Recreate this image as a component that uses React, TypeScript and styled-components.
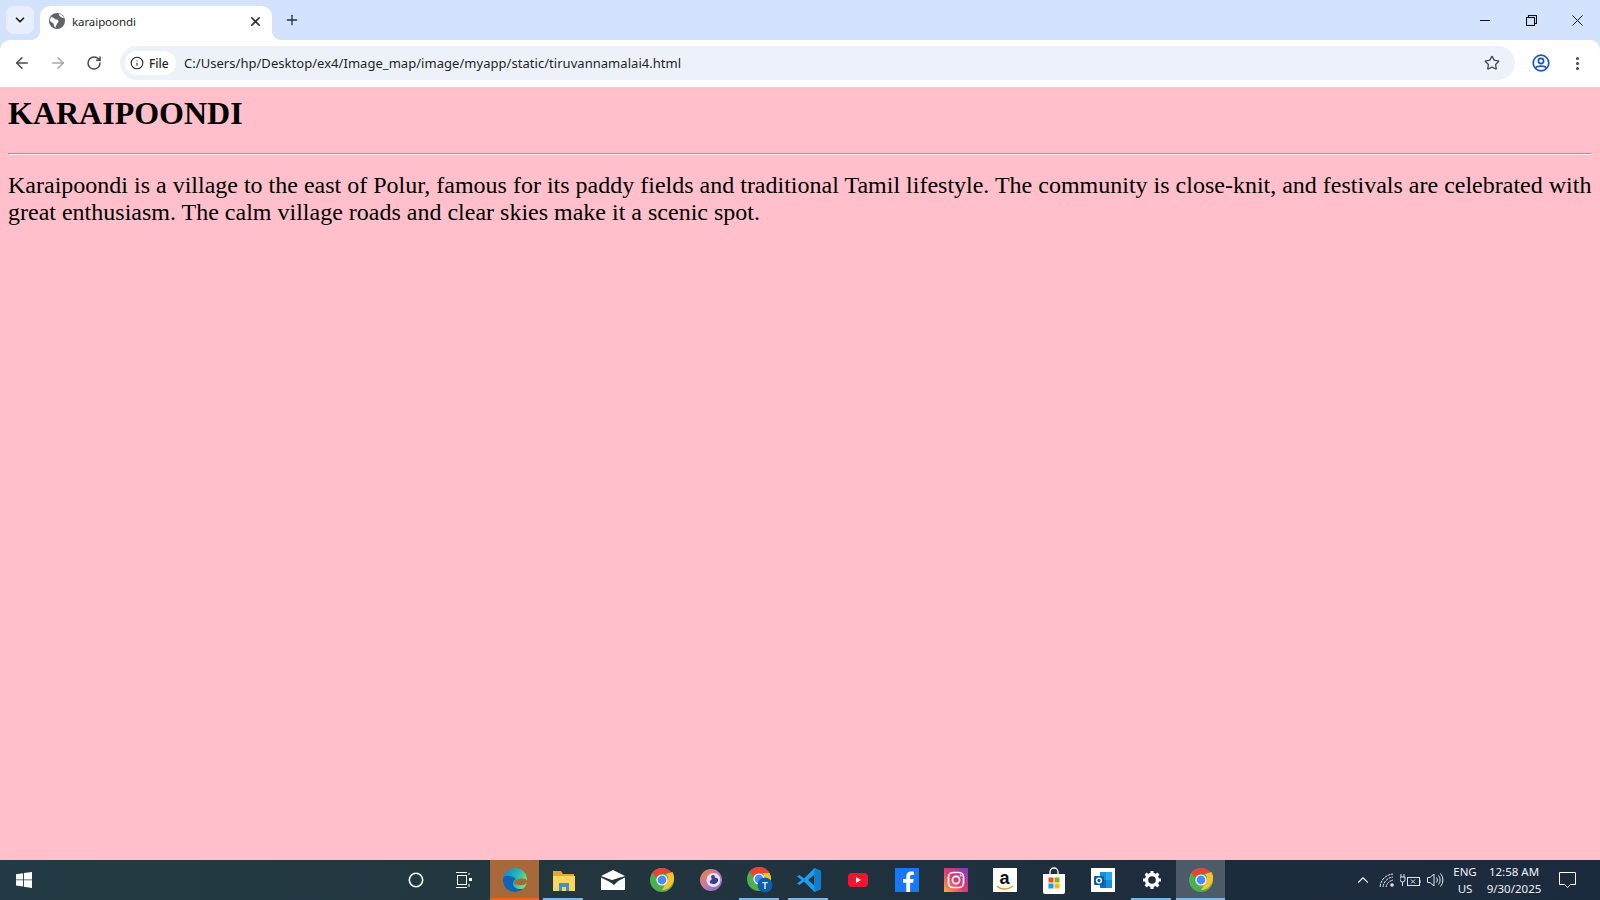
import React from 'react';
import styled, { createGlobalStyle } from 'styled-components';
import { ArrowLeft, ArrowRight, ChevronDown, ChevronUp, Info, MoreVertical, Plus, RotateCw, Star, X } from 'lucide-react';

const GlobalStyle = createGlobalStyle`
  html, body { margin: 0; padding: 0; height: 100%; overflow: hidden; }
  #root { height: 100%; }
`;

const Screen = styled.div`
  width: 1600px;
  height: 900px;
  display: flex;
  flex-direction: column;
  font-family: "Noto Sans", "Open Sans", sans-serif;
`;

/* browser chrome */
const TabStrip = styled.div`
  height: 40px;
  flex: none;
  background: #d3e3fd;
  display: flex;
  align-items: flex-end;
  padding-left: 6px;
`;

const TabSearch = styled.div`
  width: 28px;
  height: 28px;
  margin-bottom: 6px;
  border-radius: 8px;
  background: #e8effb;
  display: flex;
  align-items: center;
  justify-content: center;
  color: #1f1f1f;
`;

const Tab = styled.div`
  position: relative;
  width: 232px;
  height: 34px;
  margin-left: 6px;
  background: #fff;
  border-radius: 10px 10px 0 0;
  display: flex;
  align-items: center;
  padding: 0 9px 4px;
  box-sizing: border-box;
  font-size: 11.5px;
  color: #1f1f1f;

  &::before, &::after {
    content: '';
    position: absolute;
    bottom: 0;
    width: 10px;
    height: 10px;
  }
  &::before {
    left: -10px;
    background: radial-gradient(circle at 0 0, transparent 10px, #fff 10.5px);
  }
  &::after {
    right: -10px;
    background: radial-gradient(circle at 100% 0, transparent 10px, #fff 10.5px);
  }
`;

const TabTitle = styled.span`
  flex: 1;
  margin-left: 7px;
  letter-spacing: -0.08px;
`;

const NewTab = styled.div`
  margin: 0 0 6px 6px;
  width: 28px;
  height: 28px;
  display: flex;
  align-items: center;
  justify-content: center;
  color: #2b2f36;
`;

const WindowControls = styled.div`
  margin-left: auto;
  align-self: flex-start;
  display: flex;
`;

const WindowButton = styled.div`
  width: 46px;
  height: 40px;
  display: flex;
  align-items: center;
  justify-content: center;
`;

const Toolbar = styled.div`
  height: 47px;
  flex: none;
  background: #d3e3fd;
`;

const ToolbarInner = styled.div`
  height: 100%;
  box-sizing: border-box;
  padding: 0 0 1px 4px;
  background: #fff;
  border-radius: 10px 10px 0 0;
  display: flex;
  align-items: center;
`;

const NavButton = styled.div<{ $dim?: boolean }>`
  width: 36px;
  height: 36px;
  display: flex;
  align-items: center;
  justify-content: center;
  color: ${p => (p.$dim ? '#a4a7ab' : '#474a4f')};
`;

const Omnibox = styled.div`
  width: 1395px;
  height: 34px;
  margin: 0 8px 0 8px;
  border-radius: 17px;
  background: #edf2fa;
  display: flex;
  align-items: center;
  padding: 0 15px 0 5px;
  box-sizing: border-box;
`;

const SiteChip = styled.div`
  width: 51px;
  height: 24px;
  border-radius: 12px;
  background: #fff;
  display: flex;
  align-items: center;
  gap: 5px;
  padding-left: 5px;
  box-sizing: border-box;
  font-size: 12px;
  font-weight: 500;
  color: #1f1f1f;
`;

const Url = styled.span`
  flex: 1;
  margin-left: 8px;
  font-size: 13px;
  letter-spacing: 0.04px;
  color: #1f1f1f;
  white-space: nowrap;
`;

/* page content */
const Page = styled.main`
  flex: 1;
  background: #ffc0cb;
  padding: 8px;
  color: #000;
  font-family: "Liberation Serif", "Times New Roman", serif;
  min-height: 0;
`;

const Heading = styled.h1`
  margin: 0 0 21.44px;
  font-size: 32px;
  font-weight: bold;
`;

const Rule = styled.hr`
  margin: 0 0 17px;
`;

const Body = styled.p`
  margin: 0;
  font-size: 24px;
  line-height: 27px;
`;

/* taskbar */
const Taskbar = styled.footer`
  height: 40px;
  flex: none;
  display: flex;
  align-items: stretch;
  background: linear-gradient(90deg, #233b44 0%, #22353f 40%, #1d2c3d 75%, #1c2a3e 100%);
  color: #fff;
`;

const StartButton = styled.div`
  width: 48px;
  display: flex;
  align-items: center;
  justify-content: center;
`;

const TaskIcons = styled.div`
  margin-left: 344px;
  display: flex;
`;

const TaskItem = styled.div<{ $bg?: string; $bar?: string; $full?: boolean }>`
  position: relative;
  width: 49px;
  display: flex;
  align-items: center;
  justify-content: center;
  background: ${p => p.$bg ?? 'transparent'};

  &::after {
    content: '';
    display: ${p => (p.$bar ? 'block' : 'none')};
    position: absolute;
    bottom: 0;
    left: ${p => (p.$full ? '0' : '4px')};
    right: ${p => (p.$full ? '0' : '5px')};
    height: 2px;
    background: ${p => p.$bar};
  }
`;

const Tray = styled.div`
  margin-left: auto;
  display: flex;
  align-items: center;
`;

const TrayIcon = styled.div<{ $w: number }>`
  width: ${p => p.$w}px;
  display: flex;
  justify-content: center;
`;

const TrayText = styled.div<{ $w: number }>`
  width: ${p => p.$w}px;
  font-size: 11.5px;
  line-height: 17px;
  text-align: center;
  color: #eef1f4;
  white-space: nowrap;
`;

const Notify = styled.div`
  width: 44px;
  display: flex;
  justify-content: center;
  margin-right: 11px;
`;

const AmazonTile = styled.div`
  position: relative;
  width: 24px;
  height: 24px;
  background: #fff;
  color: #111;
  font: bold 18px/20px "Liberation Sans", sans-serif;
  text-align: center;
`;

const AmazonSmile = styled.svg`
  position: absolute;
  left: 3px;
  bottom: 1px;
`;

const WindowsLogo = () => (
  <svg width="16" height="16" viewBox="0 0 16 16" fill="#fff">
    <path d="M0 2.2 7 1.2v6.2H0zM7.9 1.1 16 0v7.4H7.9zM0 8.3h7v6.3l-7-1zM7.9 8.3H16V16l-8.1-1.2z" />
  </svg>
);

const ChromeLogo = () => (
  <svg width="24" height="24" viewBox="0 0 24 24">
    <circle cx="12" cy="12" r="12" fill="#4caf50" />
    <path d="M12 0a12 12 0 0 1 10.4 6H12a6 6 0 0 0-5.6 3.8L2.3 5A12 12 0 0 1 12 0z" fill="#ea4335" />
    <path d="M22.4 6A12 12 0 0 1 12 24l5.2-9A6 6 0 0 0 16 8z" fill="#fbc02d" transform="translate(0 -2)" />
    <circle cx="12" cy="12" r="5.6" fill="#fff" />
    <circle cx="12" cy="12" r="4.4" fill="#4a8af4" />
  </svg>
);

const EdgeLogo = () => (
  <svg width="24" height="24" viewBox="0 0 24 24">
    <defs>
      <linearGradient id="edgeTop" x1="0" y1="0.2" x2="1" y2="0.6">
        <stop offset="0" stopColor="#1b7fd0" />
        <stop offset="0.55" stopColor="#27b8b0" />
        <stop offset="1" stopColor="#86e070" />
      </linearGradient>
    </defs>
    <circle cx="12" cy="12" r="12" fill="url(#edgeTop)" />
    <path d="M.2 10C-1 18 5 24 12 24c3.400 0 6.400-1.300 8.600-3.500-5 1.800-10.600-.5-10.600-5 0-2 1.200-3.500 3-4.500C8 7 2 7 .2 10z" fill="#0f63b8" />
    <path d="M11 15c.5-3 4-4.500 8-4.500 2.500 0 5 .8 5 2.500 0 2.500-2.500 4-5.500 4-3.500 0-7.800-.5-7.500-2z" fill="#a8693a" />
  </svg>
);

const ExplorerLogo = () => (
  <svg width="24" height="24" viewBox="0 0 24 24">
    <path d="M1 3h8l2 3h11v17H1z" fill="#e0a92e" />
    <path d="M1 8h22v15H1z" fill="#fbd65e" />
    <path d="M7 15h10v8h-3v-4h-4v4H7z" fill="#3f8fc9" />
  </svg>
);

const MailLogo = () => (
  <svg width="24" height="24" viewBox="0 0 24 24" fill="#fff">
    <path d="M0 8 12 2l12 6-12 4.5z" />
    <path d="M0 9.5V22h24V9.5l-12 6z" />
    <path d="M8 13 21 9l-8 8z" fill="#22353f" />
  </svg>
);

const CopilotLogo = () => (
  <svg width="22" height="22" viewBox="0 0 22 22">
    <defs>
      <linearGradient id="arc" x1="0" y1="0" x2="1" y2="1">
        <stop offset="0" stopColor="#e8863a" />
        <stop offset="0.5" stopColor="#c77aa8" />
        <stop offset="1" stopColor="#7a6fd0" />
      </linearGradient>
    </defs>
    <circle cx="11" cy="11" r="11" fill="url(#arc)" />
    <circle cx="13.5" cy="11" r="7" fill="#e8e6f6" />
    <path d="M10 12c3-4 7-4 8-2s-2 6-5 5-4-1-3-3z" fill="#3f3a90" />
    <circle cx="13" cy="8" r="2" fill="#3f3a90" />
  </svg>
);

const ChromeBadged = () => (
  <svg width="26" height="26" viewBox="0 0 26 26">
    <circle cx="12" cy="12" r="12" fill="#4caf50" />
    <path d="M12 0a12 12 0 0 1 10.4 6H12a6 6 0 0 0-5.6 3.8L2.3 5A12 12 0 0 1 12 0z" fill="#ea4335" />
    <path d="M22.4 6A12 12 0 0 1 20 21l-5-8a6 6 0 0 0 1-7z" fill="#fbc02d" />
    <circle cx="12" cy="12" r="5.6" fill="#fff" />
    <circle cx="12" cy="12" r="4.4" fill="#4a8af4" />
    <circle cx="18" cy="18" r="7.5" fill="#0f5fa8" />
    <path d="M15.2 15h5.6v1.3h-2.1V22h-1.4v-5.7h-2.1z" fill="#e6eef7" />
  </svg>
);

const VsCodeLogo = () => (
  <svg width="24" height="24" viewBox="0 0 24 24">
    <path d="M17.5 0 24 3v18l-6.5 3L7 13.5 2.5 17 0 15.5 4.5 12 0 8.5 2.5 7 7 10.500z" fill="#1f9cf0" />
    <path d="M17.5 6.500 11 12l6.500 5.500z" fill="#22353f" />
    <path d="M17.5 0 24 3v18l-6.5 3z" fill="#0f7fcc" />
    <path d="M17.500 6.500v11L20 19V5z" fill="#0f7fcc" />
  </svg>
);

const YoutubeLogo = () => (
  <svg width="20" height="14" viewBox="0 0 20 14">
    <rect width="20" height="14" rx="4" fill="#f0142f" />
    <path d="M8 4l5 3-5 3z" fill="#fff" />
  </svg>
);

const FacebookLogo = () => (
  <svg width="24" height="24" viewBox="0 0 24 24">
    <rect width="24" height="24" fill="#1877f2" />
    <path d="M16.600 24v-9.300h3.100l.5-3.600h-3.600V8.800c0-1 .3-1.800 1.800-1.800h1.900V3.800c-.3 0-1.500-.2-2.800-.2-2.800 0-4.700 1.700-4.700 4.800v2.700H9.600v3.600h3.200V24z" fill="#fff" transform="translate(-1.500 0)" />
  </svg>
);

const InstagramLogo = () => (
  <svg width="24" height="24" viewBox="0 0 24 24">
    <defs>
      <linearGradient id="insta" x1="0" y1="1" x2="1" y2="0">
        <stop offset="0" stopColor="#fdb03c" />
        <stop offset="0.45" stopColor="#e83a6c" />
        <stop offset="1" stopColor="#7a3cc8" />
      </linearGradient>
    </defs>
    <rect width="24" height="24" fill="url(#insta)" />
    <rect x="4.500" y="4.500" width="15" height="15" rx="4.500" fill="none" stroke="#fff" strokeWidth="1.700" />
    <circle cx="12" cy="12" r="3.600" fill="none" stroke="#fff" strokeWidth="1.700" />
    <circle cx="16.600" cy="7.400" r="1" fill="#fff" />
  </svg>
);

const StoreLogo = () => (
  <svg width="24" height="27" viewBox="0 -1 24 27">
    <path d="M8 7V4a4 4 0 0 1 8 0v3" fill="none" stroke="#fff" strokeWidth="1.300" />
    <path d="M1 6h22v18a2 2 0 0 1-2 2H3a2 2 0 0 1-2-2z" fill="#fff" />
    <rect x="6.500" y="9.500" width="5" height="5" fill="#f25022" />
    <rect x="12.500" y="9.500" width="5" height="5" fill="#7fba00" />
    <rect x="6.500" y="15.500" width="5" height="5" fill="#00a4ef" />
    <rect x="12.500" y="15.500" width="5" height="5" fill="#ffb900" />
  </svg>
);

const OutlookLogo = () => (
  <svg width="24" height="24" viewBox="0 0 24 24">
    <rect width="24" height="24" fill="#fff" />
    <rect x="9" y="4" width="12" height="16" fill="#1490df" />
    <rect x="15" y="4" width="6" height="8" fill="#28a8ea" />
    <rect x="9" y="12" width="6" height="8" fill="#0f6cbd" />
    <rect x="3" y="8" width="10" height="9" rx="1" fill="#0a5ea8" />
    <circle cx="8" cy="12.500" r="2.400" fill="none" stroke="#fff" strokeWidth="1.400" />
  </svg>
);

const GearIcon = () => (
  <svg width="20" height="20" viewBox="0 0 20 20">
    <circle cx="10" cy="10" r="5.500" fill="none" stroke="#fff" strokeWidth="3.400" />
    <path d="M10 1v18M1 10h18M3.600 3.600l12.800 12.800M16.400 3.600 3.600 16.400" stroke="#fff" strokeWidth="3.200" strokeDasharray="3 12 3 0" />
  </svg>
);

const SearchRing = () => (
  <svg width="16" height="16" viewBox="1 0 16 16" overflow="visible">
    <circle cx="8" cy="8" r="6.700" fill="none" stroke="#fff" strokeWidth="1.600" />
  </svg>
);

const TaskViewIcon = () => (
  <svg width="16" height="16" viewBox="2 0 16 16" overflow="visible" fill="none" stroke="#fff" strokeWidth="1">
    <rect x="1.500" y="3.500" width="9" height="9" />
    <path d="M0 .5h11M0 15.500h11M13 1v2M13 12v3" />
    <rect x="13" y="6" width="3" height="3" fill="#fff" stroke="none" />
  </svg>
);

const WifiIcon = () => (
  <svg width="16" height="16" viewBox="0 0 16 16" fill="none" stroke="#dfe4ea" strokeWidth="1">
    <path d="M1 15C1.500 8 7 2.500 14 2M4 15c.5-5 4.500-9.500 10-10M7 15c.5-3 3-6 7-7" strokeDasharray="3 .6" />
    <circle cx="13" cy="13" r="1.800" fill="#dfe4ea" stroke="none" />
  </svg>
);

const BatteryIcon = () => (
  <svg width="22" height="16" viewBox="0 0 22 16" fill="none" stroke="#dfe4ea" strokeWidth="1">
    <path d="M1 2v3M4 2v3M0 5h5v2.500a2.500 2.500 0 0 1-5 0zM2.500 10v4" />
    <rect x="7.500" y="5.500" width="12" height="8" />
    <path d="M20 8v3M11 7.500l4 4M15 7.500l-4 4" />
  </svg>
);

const VolumeIcon = () => (
  <svg width="17" height="16" viewBox="0 0 17 16" fill="none" stroke="#dfe4ea" strokeWidth="1">
    <path d="M.5 5.500h2.500l4-3.500v12l-4-3.500H.5zM9.500 5.500a4 4 0 0 1 0 5M11.500 3.500a7 7 0 0 1 0 9M13.500 1.500a10 10 0 0 1 0 13" />
  </svg>
);

const NotifyIcon = () => (
  <svg width="17" height="17" viewBox="0 0 17 17" fill="none" stroke="#fff" strokeWidth="1">
    <path d="M.5.500h16v12h-5l-3 3-3-3h-5z" />
  </svg>
);

const GlobeFavicon = () => (
  <svg width="16" height="16" viewBox="0 0 16 16">
    <circle cx="8" cy="8" r="8" fill="#5f6368" />
    <path d="M2 4c2 0 3 1 4 2s2 0 3 1 0 3-1 4-1 3-2 4c-1-2-1-4-2-5S1 9 1 7zM10 1c0 2 1 2 2 3s2 1 3 1c-1-2-3-4-5-4z" fill="#fff" />
  </svg>
);

const ProfileIcon = () => (
  <svg width="18" height="18" viewBox="0 0 18 18" fill="none" stroke="#1a56b8" strokeWidth="1.700">
    <circle cx="9" cy="9" r="7.800" />
    <circle cx="9" cy="7" r="2.600" />
    <path d="M3.500 14c1.500-2.500 9.500-2.500 11 0" />
  </svg>
);

const App: React.FC = () => {
  return (
    <>
      <GlobalStyle />
      <Screen>
        <TabStrip>
          <TabSearch>
            <ChevronDown size={14} strokeWidth={3} />
          </TabSearch>
          <Tab>
            <GlobeFavicon />
            <TabTitle>karaipoondi</TabTitle>
            <X size={15} strokeWidth={2.6} color="#2b2f36" />
          </Tab>
          <NewTab>
            <Plus size={16} strokeWidth={2} />
          </NewTab>
          <WindowControls>
            <WindowButton>
              <svg width="11" height="11" viewBox="0 0 11 11" stroke="#111" strokeWidth="1"><path d="M0 5.500h10" /></svg>
            </WindowButton>
            <WindowButton>
              <svg width="11" height="11" viewBox="0 0 11 11" fill="none" stroke="#111" strokeWidth="1.100"><rect x=".5" y="2.500" width="8" height="8" /><path d="M2.500 2.500v-2h8v8h-2" /></svg>
            </WindowButton>
            <WindowButton>
              <svg width="11" height="11" viewBox="0 0 11 11" stroke="#111" strokeWidth="1"><path d="M.5.500l10 10M10.500.500l-10 10" /></svg>
            </WindowButton>
          </WindowControls>
        </TabStrip>
        <Toolbar>
          <ToolbarInner>
            <NavButton><ArrowLeft size={18} strokeWidth={2} /></NavButton>
            <NavButton $dim><ArrowRight size={18} strokeWidth={2} /></NavButton>
            <NavButton><RotateCw size={16} strokeWidth={2.2} /></NavButton>
            <Omnibox>
              <SiteChip>
                <Info size={14} strokeWidth={1.8} />
                File
              </SiteChip>
              <Url>C:/Users/hp/Desktop/ex4/Image_map/image/myapp/static/tiruvannamalai4.html</Url>
              <Star size={16} strokeWidth={2} color="#474a4f" />
            </Omnibox>
            <NavButton><ProfileIcon /></NavButton>
            <NavButton><MoreVertical size={17} strokeWidth={2.400} /></NavButton>
          </ToolbarInner>
        </Toolbar>
        <Page>
          <Heading>KARAIPOONDI</Heading>
          <Rule />
          <Body>
            Karaipoondi is a village to the east of Polur, famous for its paddy fields and traditional Tamil lifestyle. The community is close-knit, and festivals are celebrated with great enthusiasm. The calm village roads and clear skies make it a scenic spot.
          </Body>
        </Page>
        <Taskbar>
          <StartButton><WindowsLogo /></StartButton>
          <TaskIcons>
            <TaskItem><SearchRing /></TaskItem>
            <TaskItem><TaskViewIcon /></TaskItem>
            <TaskItem $bg="#a8693a" $bar="#f7630c" $full><EdgeLogo /></TaskItem>
            <TaskItem $bar="#76b9ed"><ExplorerLogo /></TaskItem>
            <TaskItem><MailLogo /></TaskItem>
            <TaskItem><ChromeLogo /></TaskItem>
            <TaskItem><CopilotLogo /></TaskItem>
            <TaskItem $bar="#76b9ed"><ChromeBadged /></TaskItem>
            <TaskItem $bar="#76b9ed"><VsCodeLogo /></TaskItem>
            <TaskItem><YoutubeLogo /></TaskItem>
            <TaskItem><FacebookLogo /></TaskItem>
            <TaskItem><InstagramLogo /></TaskItem>
            <TaskItem>
              <AmazonTile>
                a
                <AmazonSmile width="18" height="6" viewBox="0 0 18 6" fill="none" stroke="#f49a1a" strokeWidth="1.400"><path d="M1 1c4 4 11 4 16 0" /></AmazonSmile>
              </AmazonTile>
            </TaskItem>
            <TaskItem><StoreLogo /></TaskItem>
            <TaskItem><OutlookLogo /></TaskItem>
            <TaskItem $bar="#76b9ed"><GearIcon /></TaskItem>
            <TaskItem $bg="#4d5a68" $bar="#76b9ed" $full><ChromeLogo /></TaskItem>
          </TaskIcons>
          <Tray>
            <TrayIcon $w={24}><ChevronUp size={18} strokeWidth={1.500} color="#eef1f4" /></TrayIcon>
            <TrayIcon $w={24}><WifiIcon /></TrayIcon>
            <TrayIcon $w={24}><BatteryIcon /></TrayIcon>
            <TrayIcon $w={24}><VolumeIcon /></TrayIcon>
            <TrayText $w={36}>ENG<br />US</TrayText>
            <TrayText $w={62}>12:58 AM<br />9/30/2025</TrayText>
            <Notify><NotifyIcon /></Notify>
          </Tray>
        </Taskbar>
      </Screen>
    </>
  );
};

export default App;
